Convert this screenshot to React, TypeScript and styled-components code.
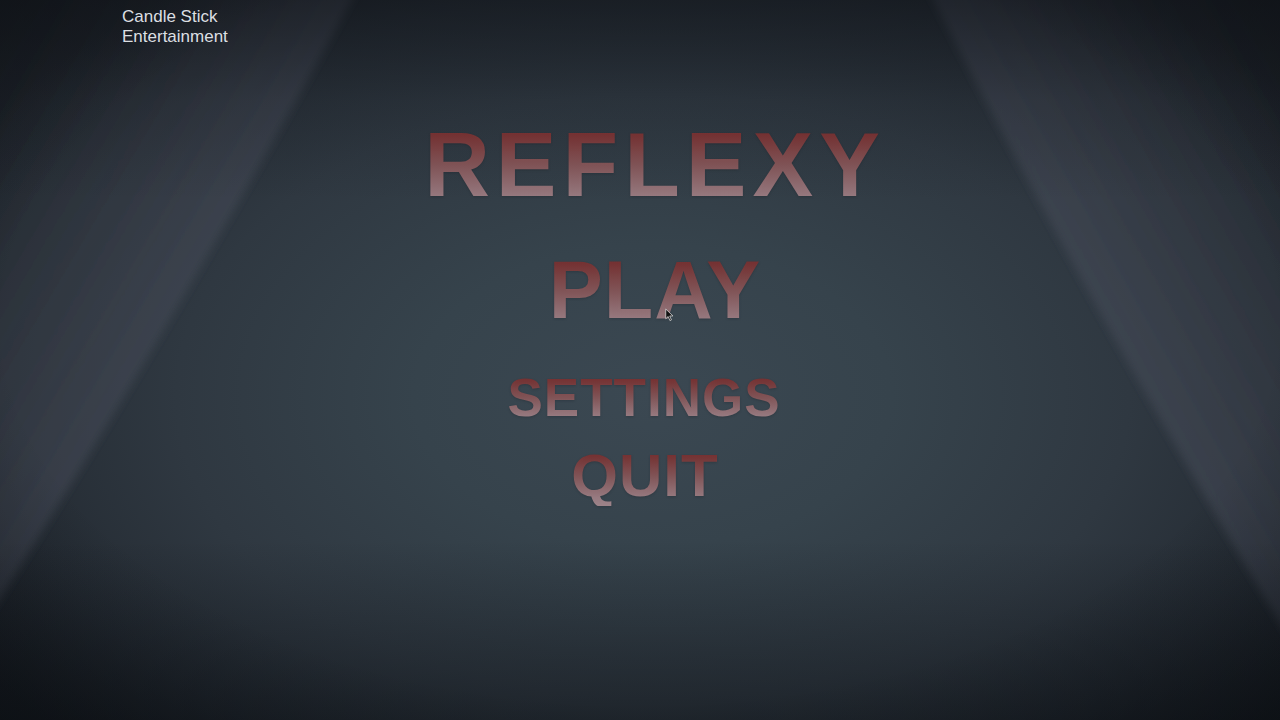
import styled, { createGlobalStyle } from "styled-components";

const GlobalStyle = createGlobalStyle`
    html, body {
        margin: 0;
        padding: 0;
        width: 100%;
        height: 100%;
        overflow: hidden;
        background: #1c2229;
    }
    #root {
        height: 100%;
    }
`

const menu = [
    { label: 'PLAY', size: 81, gap: 40, nudge: 0 },
    { label: 'SETTINGS', size: 53, gap: 40, nudge: -22 },
    { label: 'QUIT', size: 60, gap: 22, nudge: -20 },
];

export default function App() {
    return (
        <>
            <GlobalStyle/>
            <Screen>
                <Beams viewBox="0 0 1280 720" preserveAspectRatio="none">
                    <defs>
                        <linearGradient id="beamLeft" gradientUnits="userSpaceOnUse" x1="185" y1="300" x2="-70" y2="150">
                            <stop offset="0" stopColor="#4a4f5c" stopOpacity="0.5"/>
                            <stop offset="0.45" stopColor="#434854" stopOpacity="0.3"/>
                            <stop offset="1" stopColor="#3a3f4a" stopOpacity="0.05"/>
                        </linearGradient>
                        <linearGradient id="beamRight" gradientUnits="userSpaceOnUse" x1="1100" y1="305" x2="1350" y2="165">
                            <stop offset="0" stopColor="#4a4f5c" stopOpacity="0.5"/>
                            <stop offset="0.45" stopColor="#434854" stopOpacity="0.3"/>
                            <stop offset="1" stopColor="#3a3f4a" stopOpacity="0.05"/>
                        </linearGradient>
                        <filter id="soft" x="-10%" y="-10%" width="120%" height="120%">
                            <feGaussianBlur stdDeviation="4"/>
                        </filter>
                    </defs>
                    <path d="M-30,-30 L368,-30 Q200,280 -10,615 L-30,640 Z" fill="url(#beamLeft)" filter="url(#soft)"/>
                    <path d="M918,-30 L1310,-30 L1310,660 L1290,640 Q1085,300 918,-30 Z" fill="url(#beamRight)" filter="url(#soft)"/>
                </Beams>
                <Vignette/>

                <Studio>Candle Stick<br/>Entertainment</Studio>

                <Menu>
                    <Title>REFLEXY</Title>
                    {menu.map(item => (
                        <MenuItem key={item.label} size={item.size} gap={item.gap} nudge={item.nudge}>
                            {item.label}
                        </MenuItem>
                    ))}
                </Menu>

                <Cursor viewBox="0 0 12 18">
                    <path d="M1 1 L1 14 L4.2 11 L6.6 16.5 L8.6 15.6 L6.3 10.3 L10.6 10.3 Z" fill="#111" stroke="#ddd" strokeWidth="1"/>
                </Cursor>
            </Screen>
        </>
    );
}

const Screen = styled.div`
    position: relative;
    width: 100%;
    height: 100vh;
    overflow: hidden;
    background: radial-gradient(ellipse 62% 70% at 51% 55%, #3b4852 0%, #36434c 30%, #2f3841 60%, #252c34 82%, #1a1f25 100%);
    font-family: "Liberation Sans", Arial, sans-serif;
`
const Beams = styled.svg`
    position: absolute;
    inset: 0;
    width: 100%;
    height: 100%;
`
const Vignette = styled.div`
    position: absolute;
    inset: 0;
    background:
        linear-gradient(to bottom, rgba(12, 15, 20, 0.5) 0%, rgba(12, 15, 20, 0.15) 14%, rgba(12, 15, 20, 0) 28%, rgba(12, 15, 20, 0) 75%, rgba(8, 11, 15, 0.4) 100%),
        radial-gradient(ellipse 80% 85% at 50% 45%, rgba(0, 0, 0, 0) 62%, rgba(6, 9, 13, 0.6) 100%);
`
const Studio = styled.div`
    position: relative;
    z-index: 1;
    padding: 7px 0 0 122px;
    color: #dcdfe2;
    font-size: 17px;
    line-height: 20px;
`
const Menu = styled.div`
    position: relative;
    z-index: 1;
    display: flex;
    flex-direction: column;
    align-items: center;
    margin-top: 72px;
    padding-left: 30px;
    font-weight: 700;
`
const gradientText = `
    background: linear-gradient(to bottom, rgba(122, 42, 42, 0.9) 0%, rgba(124, 48, 48, 0.9) 15%, rgba(140, 88, 90, 0.88) 50%, rgba(166, 132, 138, 0.88) 86%, rgba(172, 142, 148, 0.88) 100%);
    -webkit-background-clip: text;
    background-clip: text;
    color: transparent;
    filter: drop-shadow(0 1px 1px rgba(15, 18, 24, 0.25));
`
const Title = styled.h1`
    margin: 0;
    font-size: 91px;
    line-height: 1;
    font-weight: 700;
    letter-spacing: 6px;
    ${gradientText}
`
const MenuItem = styled.div<{ size: number, gap: number, nudge: number }>`
    margin-top: ${props => props.gap}px;
    margin-left: ${props => props.nudge}px;
    font-size: ${props => props.size}px;
    line-height: 1;
    letter-spacing: 1px;
    cursor: pointer;
    ${gradientText}
`
const Cursor = styled.svg`
    position: absolute;
    left: 665px;
    top: 308px;
    width: 9px;
    height: 14px;
    z-index: 2;
`
